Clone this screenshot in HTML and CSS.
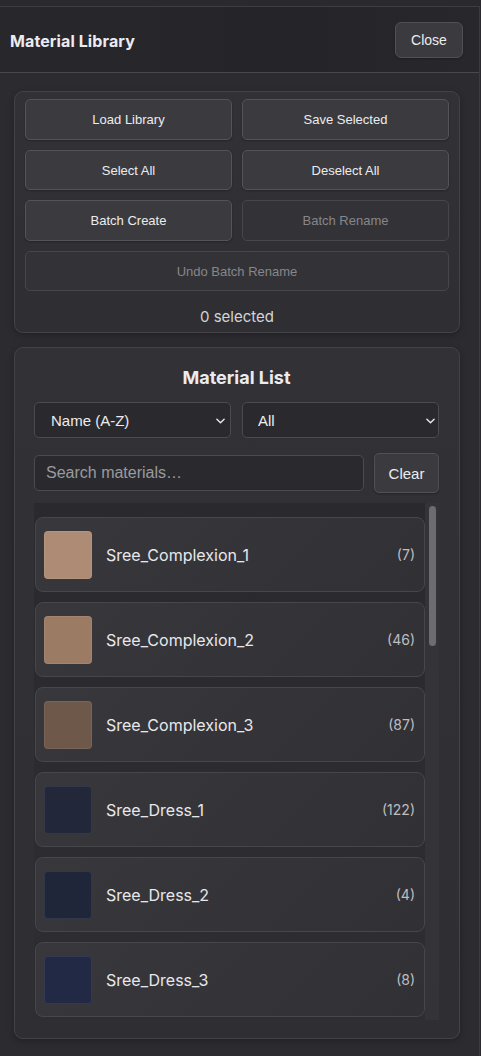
FILE: index.html
```html
<!DOCTYPE html>
<html lang="en">
<head>
<meta charset="utf-8">
<title>Material Library</title>
<link rel="stylesheet" href="styles.css">
</head>
<body>
<div class="app">
  <header class="header">
    <h1 class="title">Material Library</h1>
    <button class="btn close-btn">Close</button>
  </header>
  <main class="content">
    <section class="panel actions">
      <div class="btn-grid">
        <button class="btn">Load Library</button>
        <button class="btn">Save Selected</button>
        <button class="btn">Select All</button>
        <button class="btn">Deselect All</button>
        <button class="btn">Batch Create</button>
        <button class="btn" disabled>Batch Rename</button>
        <button class="btn wide" disabled>Undo Batch Rename</button>
      </div>
      <div class="selected-count">0 selected</div>
    </section>

    <section class="panel list-panel">
      <h2 class="list-title">Material List</h2>
      <div class="filters">
        <div class="select-wrap">
          <select class="select"><option>Name (A-Z)</option></select>
          <svg class="chev" viewBox="0 0 10 6" width="9" height="6"><path d="M1 1l4 4 4-4" fill="none" stroke="#e6e6e8" stroke-width="1.6" stroke-linecap="round" stroke-linejoin="round"/></svg>
        </div>
        <div class="select-wrap">
          <select class="select"><option>All</option></select>
          <svg class="chev" viewBox="0 0 10 6" width="9" height="6"><path d="M1 1l4 4 4-4" fill="none" stroke="#e6e6e8" stroke-width="1.6" stroke-linecap="round" stroke-linejoin="round"/></svg>
        </div>
      </div>
      <div class="search-row">
        <input class="search" type="text" placeholder="Search materials…">
        <button class="btn clear-btn">Clear</button>
      </div>
      <div class="list-wrap">
        <div class="mat-list">
          <div class="item"><span class="swatch" style="background:#ad8b75"></span><span class="name">Sree_Complexion_1</span><span class="count">(7)</span></div>
          <div class="item"><span class="swatch" style="background:#9c7b65"></span><span class="name">Sree_Complexion_2</span><span class="count">(46)</span></div>
          <div class="item"><span class="swatch" style="background:#6e5849"></span><span class="name">Sree_Complexion_3</span><span class="count">(87)</span></div>
          <div class="item"><span class="swatch" style="background:#22273a"></span><span class="name">Sree_Dress_1</span><span class="count">(122)</span></div>
          <div class="item"><span class="swatch" style="background:#1f2639"></span><span class="name">Sree_Dress_2</span><span class="count">(4)</span></div>
          <div class="item"><span class="swatch" style="background:#222944"></span><span class="name">Sree_Dress_3</span><span class="count">(8)</span></div>
        </div>
        <div class="scrollbar"><div class="thumb"></div></div>
      </div>
    </section>
  </main>
</div>
</body>
</html>
```

FILE: styles.css
```css
* { box-sizing: border-box; }

html, body {
  margin: 0;
  padding: 0;
  background: #2a2a2e;
  height: 100%;
  overflow: hidden;
}

body {
  font-family: Inter, "Noto Sans", "Liberation Sans", sans-serif;
  color: #e8e8ec;
}

.app {
  margin-top: 6px;
  width: 480px;
  height: 1050px;
  border-top: 1px solid #3d3d42;
  border-right: 1px solid #3a3a3f;
  background: #2c2c30;
}

.header {
  height: 66px;
  display: flex;
  align-items: center;
  justify-content: space-between;
  padding: 0 16px 0 10px;
  background: linear-gradient(90deg, #28282c, #252529 60%, #28282c);
  border-bottom: 1px solid #48484d;
}

.title {
  margin: 0;
  font-size: 16px;
  font-weight: 700;
  color: #ececf0;
  letter-spacing: 0.1px;
  position: relative;
  top: 1px;
}

.btn {
  font-family: "Liberation Sans", Arial, sans-serif;
  font-size: 13px;
  color: #ececee;
  background: #3b3b3f;
  border: 1px solid #535358;
  border-radius: 5px;
  cursor: pointer;
  box-shadow: 0 1px 2px rgba(0,0,0,0.25);
}

.btn:disabled {
  color: #86868b;
  background: #333337;
  border-color: #46464b;
  box-shadow: none;
}

.close-btn {
  width: 68px;
  height: 36px;
  font-size: 14px;
  border-radius: 6px;
  border-color: #505055;
}

.content {
  padding: 18px 19px 0 14px;
  display: flex;
  flex-direction: column;
  gap: 14px;
}

.panel {
  background: linear-gradient(180deg, #323236, #2f2f33);
  border: 1px solid #424247;
  border-radius: 9px;
  box-shadow: 0 2px 6px rgba(0,0,0,0.25);
}

.actions {
  padding: 7px 10px 5px;
}

.btn-grid {
  display: grid;
  grid-template-columns: 1fr 1fr;
  gap: 10px;
}

.btn-grid .btn {
  height: 41px;
}

.btn-grid .btn:nth-child(3), .btn-grid .btn:nth-child(4) {
  height: 40px;
}

.btn-grid .wide {
  grid-column: 1 / 3;
  height: 40px;
}

.selected-count {
  text-align: center;
  font-size: 15px;
  color: #d4d4d8;
  margin-top: 16px;
  line-height: 20px;
}

.list-panel {
  padding: 18px 20px 18px 19px;
  height: 692px;
}

.list-title {
  margin: 0 0 12px;
  text-align: center;
  font-size: 18px;
  font-weight: 700;
  line-height: 24px;
  color: #ececf0;
}

.filters {
  display: grid;
  grid-template-columns: 1fr 1fr;
  gap: 11px;
}

.select-wrap {
  position: relative;
}

.select {
  appearance: none;
  -webkit-appearance: none;
  width: 100%;
  height: 36px;
  background: #2a2a2e;
  border: 1px solid #4a4a4f;
  border-radius: 5px;
  color: #ececee;
  font-family: "Liberation Sans", Arial, sans-serif;
  font-size: 15px;
  padding: 0 16px;
  outline: none;
}

.select-wrap + .select-wrap .select {
  padding-left: 15px;
}

.chev {
  position: absolute;
  right: 4px;
  top: 16px;
  pointer-events: none;
}

.select-wrap:first-child .chev {
  right: 6px;
}

.search-row {
  display: flex;
  align-items: center;
  gap: 10px;
  margin-top: 15px;
}

.search {
  flex: 1;
  height: 36px;
  background: #2a2a2e;
  border: 1px solid #4a4a4f;
  border-radius: 5px;
  color: #ececee;
  font-family: "Liberation Sans", Arial, sans-serif;
  font-size: 16px;
  padding: 0 11px;
  outline: none;
}

.search::placeholder {
  color: #9a9a9f;
}

.clear-btn {
  width: 65px;
  height: 40px;
  font-size: 15px;
  border-color: #505055;
}

.list-wrap {
  margin-top: 10px;
  height: 517px;
  display: flex;
}

.mat-list {
  flex: 1;
  overflow: hidden;
  background: linear-gradient(180deg, #2a2a2e, #2e2e32);
  padding: 14px 0 0 1px;
  display: flex;
  flex-direction: column;
  gap: 10px;
}

.scrollbar {
  width: 14px;
  flex: none;
  background: #343438;
  padding: 3px 3px 0 4px;
}

.thumb {
  height: 140px;
  width: 7px;
  border-radius: 4px;
  background: #6c6c71;
}

.item {
  flex: 0 0 75px;
  height: 75px;
  display: flex;
  align-items: center;
  padding: 0 9px 0 8px;
  background: linear-gradient(135deg, #38383c, #313135);
  border: 1px solid #46464b;
  border-radius: 8px;
}

.swatch {
  width: 48px;
  height: 48px;
  border-radius: 4px;
  flex: none;
  border: 1px solid rgba(255,255,255,0.08);
}

.name {
  margin-left: 14px;
  flex: 1;
  font-size: 16px;
  color: #e8e8ec;
}

.count {
  font-size: 14px;
  color: #bdbdc2;
}
```
